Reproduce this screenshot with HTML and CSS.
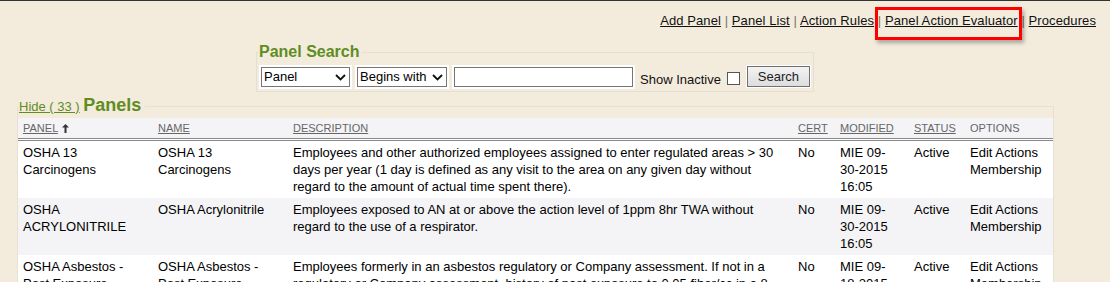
FILE: index.html
```html
<!DOCTYPE html>
<html>
<head>
<meta charset="utf-8">
<title>Panels</title>
<link rel="stylesheet" href="styles.css">
</head>
<body>
<nav class="topnav">
  <a href="#">Add Panel</a> <span class="sep">|</span> <a href="#">Panel List</a> <span class="sep">|</span> <a href="#">Action Rules</a> <span class="sep">|</span> <a href="#" class="highlight">Panel Action Evaluator</a> <span class="sep">|</span> <a href="#">Procedures</a>
</nav>

<fieldset class="search">
  <legend>Panel Search</legend>
  <div class="search-row">
    <span class="sel sel-field">
      <select><option>Panel</option></select>
      <svg class="chev" width="11" height="7" viewBox="0 0 11 7"><path d="M1 1 L5.5 5.5 L10 1" fill="none" stroke="#111" stroke-width="1.8"/></svg>
    </span>
    <span class="sel sel-op">
      <select><option>Begins with</option></select>
      <svg class="chev" width="11" height="7" viewBox="0 0 11 7"><path d="M1 1 L5.5 5.5 L10 1" fill="none" stroke="#111" stroke-width="1.8"/></svg>
    </span>
    <input class="txt" type="text">
    <label class="inactive">Show Inactive</label>
    <input class="chk" type="checkbox">
    <button class="btn" type="button">Search</button>
  </div>
</fieldset>

<fieldset class="panels">
  <legend><a href="#" class="hide">Hide ( 33 )</a> <span class="title">Panels</span></legend>
  <table class="grid">
    <colgroup>
      <col class="c-panel"><col class="c-name"><col class="c-desc"><col class="c-cert"><col class="c-mod"><col class="c-status"><col class="c-opt">
    </colgroup>
    <thead>
      <tr>
        <th><a href="#">PANEL</a> <svg class="sort" width="7" height="9" viewBox="0 0 7 9"><path d="M3.5 0 L7 3.5 L4.5 3.5 L4.5 9 L2.5 9 L2.5 3.5 L0 3.5 Z" fill="#333"/></svg></th>
        <th><a href="#">NAME</a></th>
        <th><a href="#">DESCRIPTION</a></th>
        <th><a href="#">CERT</a></th>
        <th><a href="#">MODIFIED</a></th>
        <th><a href="#">STATUS</a></th>
        <th>OPTIONS</th>
      </tr>
    </thead>
    <tbody>
      <tr>
        <td>OSHA 13 Carcinogens</td>
        <td>OSHA 13 Carcinogens</td>
        <td>Employees and other authorized employees assigned to enter regulated areas &gt; 30 days per year (1 day is defined as any visit to the area on any given day without regard to the amount of actual time spent there).</td>
        <td>No</td>
        <td>MIE 09-30-2015 16:05</td>
        <td>Active</td>
        <td>Edit Actions Membership</td>
      </tr>
      <tr>
        <td>OSHA ACRYLONITRILE</td>
        <td>OSHA Acrylonitrile</td>
        <td>Employees exposed to AN at or above the action level of 1ppm 8hr TWA without regard to the use of a respirator.</td>
        <td>No</td>
        <td>MIE 09-30-2015 16:05</td>
        <td>Active</td>
        <td>Edit Actions Membership</td>
      </tr>
      <tr>
        <td>OSHA Asbestos - Post Exposure</td>
        <td>OSHA Asbestos - Post Exposure</td>
        <td>Employees formerly in an asbestos regulatory or Company assessment. If not in a regulatory or Company assessment, history of past exposure to 0.05 fiber/cc in a 8 hour TWA for 30 days or more per year.</td>
        <td>No</td>
        <td>MIE 09-18-2015 16:05</td>
        <td>Active</td>
        <td>Edit Actions Membership</td>
      </tr>
    </tbody>
  </table>
</fieldset>
</body>
</html>
```

FILE: styles.css
```css
* { box-sizing: border-box; }

html, body { margin: 0; padding: 0; }

body {
  background: #f3ecdd;
  font-family: "Liberation Sans", Arial, sans-serif;
  font-size: 13px;
  color: #000;
  border-top: 1px solid #333;
  height: 282px;
  overflow: hidden;
}

/* top navigation */
.topnav {
  text-align: right;
  padding: 11px 14px 0 0;
  line-height: 17px;
  letter-spacing: 0.09px;
}
.topnav a { color: #111; text-decoration: underline; }
.topnav .sep { color: #7d7560; }

.highlight { position: relative; }
.highlight::after {
  content: "";
  position: absolute;
  left: -10px;
  right: -4px;
  top: -6px;
  bottom: -12px;
  border: 3px solid #f00;
  box-shadow: 2px 3px 4px rgba(0, 0, 0, 0.3);
  pointer-events: none;
}

/* search box */
.search {
  margin: 14px 0 0 256px;
  width: 558px;
  border: 1px solid #e4dfd3;
  padding: 4px 2px 3px 2px;
  min-inline-size: 0;
}
.search legend {
  padding: 0 2px 0 0;
  font-size: 16px;
  font-weight: bold;
  line-height: 18px;
  color: #5f8d22;
}
.search-row {
  display: flex;
  align-items: center;
  height: 23px;
}
.sel { position: relative; display: inline-flex; }
.sel select {
  -webkit-appearance: none;
  appearance: none;
  height: 20px;
  border: 1px solid #767676;
  border-radius: 0;
  background: #fff;
  box-shadow: 0 0 0 2px #fff;
  font-family: "Liberation Sans", Arial, sans-serif;
  font-size: 13px;
  color: #000;
  padding: 0 0 0 2px;
  line-height: 18px;
}
.sel .chev { position: absolute; right: 4px; top: 7px; }
.sel-field { margin-left: 2px; }
.sel-field select { width: 89px; }
.sel-op { margin-left: 7px; }
.sel-op select { width: 90px; }
.txt {
  margin: 0 0 0 7px;
  width: 179px;
  height: 20px;
  border: 1px solid #767676;
  border-radius: 0;
  background: #fff;
  box-shadow: 0 0 0 2px #fff;
  padding: 0;
}
.inactive {
  margin-left: 7px;
  font-size: 13px;
  padding-top: 5px;
  color: #111;
}
.chk {
  -webkit-appearance: none;
  appearance: none;
  margin: 4px 0 0 6px;
  width: 13px;
  height: 13px;
  border: 1px solid #555;
  background: #fff;
  border-radius: 0;
}
.btn {
  margin-left: 7px;
  width: 63px;
  height: 21px;
  border: 1px solid #707070;
  border-radius: 0;
  background: linear-gradient(#f3f3f3, #dddddd);
  box-shadow: 0 0 0 1px #fff;
  font-family: "Liberation Sans", Arial, sans-serif;
  font-size: 13px;
  color: #222;
  padding: 0;
}

/* panels list */
.panels {
  margin: 3px 0 0 17px;
  width: 1037px;
  border: 1px solid #e6e1d6;
  padding: 1px 0 0 0;
  min-inline-size: 0;
}
.panels legend {
  padding: 0 4px 0 1px;
  line-height: 20px;
}
.hide {
  color: #5f8d22;
  font-size: 13px;
  text-decoration: underline;
}
.title {
  color: #5f8d22;
  font-size: 18px;
  font-weight: bold;
}

.grid {
  width: 100%;
  table-layout: fixed;
  border-collapse: collapse;
  background: #fff;
}
.c-panel { width: 135px; }
.c-name { width: 135px; }
.c-desc { width: 505px; }
.c-cert { width: 42px; }
.c-mod { width: 74px; }
.c-status { width: 56px; }
.c-opt { width: 88px; }

.grid th {
  height: 21px;
  padding: 0 8px 0 5px;
  background: #f4f4f6;
  border-bottom: 3px double #888;
  font-size: 11px;
  font-weight: normal;
  text-align: left;
  color: #666;
  white-space: nowrap;
}
.grid th a { color: #666; text-decoration: underline; }
.grid th .sort { vertical-align: -1px; margin-left: 1px; }

.grid td {
  padding: 3px 8px 3px 5px;
  vertical-align: top;
  line-height: 17px;
  font-size: 13px;
  color: #000;
}
.grid tbody tr:nth-child(even) td { background: #f4f4f6; }
```
